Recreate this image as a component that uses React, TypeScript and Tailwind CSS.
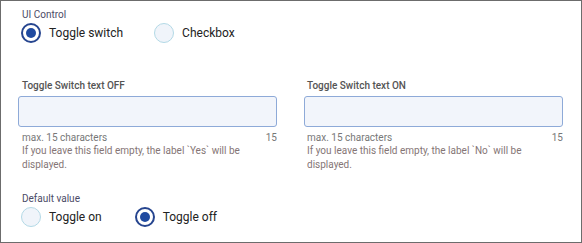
import React from "react";

function Radio({ checked, label }: { checked: boolean; label: string }) {
  return (
    <label className="flex items-center gap-[8px]">
      {checked ? (
        <span className="flex h-[20px] w-[20px] items-center justify-center rounded-full border-2 border-[#26458f] bg-white">
          <span className="h-[10px] w-[10px] rounded-full bg-[#1f4aa0]" />
        </span>
      ) : (
        <span className="h-[20px] w-[20px] rounded-full border border-[#b3d9e6] bg-[#f0f4fa]" />
      )}
      <span className="text-[12px] leading-[16px] text-[#222]">{label}</span>
    </label>
  );
}

function Field({ label, hint, indent }: { label: string; hint: string; indent: string }) {
  return (
    <div className="flex w-[259px] flex-col">
      <div className={`${indent} text-[10px] font-medium leading-[14px] text-[#545454]`}>{label}</div>
      <div className="mt-[3px] h-[31px] rounded-[3px] border border-[#8eaad8] bg-[#f2f5fb]" />
      <div className={`${indent} mt-[4px] flex justify-between text-[10px] leading-[13px] text-[#777]`}>
        <span>max. 15 characters</span>
        <span>15</span>
      </div>
      <div className={`${indent} text-[10px] leading-[13.5px] text-[#857575]`}>{hint}</div>
    </div>
  );
}

export default function App() {
  return (
    <div className="h-[243px] w-[582px] border border-[#6c6c6c] bg-white pl-[17px] pr-[17px] pt-[7px] font-['Roboto',sans-serif]">
      <div className="pl-[4px] text-[10px] leading-[14px] text-[#4b4b66]">UI Control</div>
      <div className="mt-[1px] flex gap-[31px] pl-[3px]">
        <Radio checked label="Toggle switch" />
        <Radio checked={false} label="Checkbox" />
      </div>
      <div className="mt-[36px] flex gap-[27px]">
        <Field
          label="Toggle Switch text OFF"
          hint="If you leave this field empty, the label `Yes` will be displayed."
          indent="pl-[4px]"
        />
        <Field
          label="Toggle Switch text ON"
          hint="If you leave this field empty, the label `No` will be displayed."
          indent="pl-[3px]"
        />
      </div>
      <div className="mt-[21px] pl-[4px] text-[10px] leading-[14px] text-[#4b4b66]">Default value</div>
      <div className="mt-[1px] flex gap-[33px] pl-[3px]">
        <Radio checked={false} label="Toggle on" />
        <Radio checked label="Toggle off" />
      </div>
    </div>
  );
}
